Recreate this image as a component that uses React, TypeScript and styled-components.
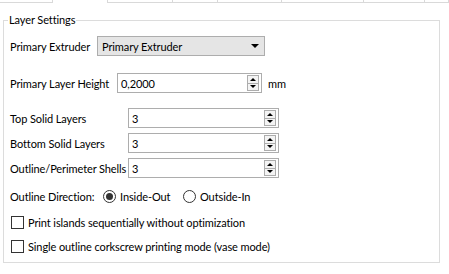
import React from "react";
import styled, { createGlobalStyle } from "styled-components";

const Global = createGlobalStyle`
  html, body { margin: 0; padding: 0; background: #ffffff; }
  body {
    font-family: Lato, "Liberation Sans", sans-serif;
    font-size: 11px;
    letter-spacing: -0.1px;
    color: #000;
  }
`;

const Page = styled.div`
  width: 449px;
  height: 274px;
  background: #fff;
  overflow: hidden;
`;

const TabStrip = styled.div`
  display: flex;
  height: 3px;
`;

const Tab = styled.div<{ $w: number; $sel?: boolean }>`
  box-sizing: border-box;
  width: ${(p) => p.$w}px;
  flex: none;
  height: 3px;
  border-right: 1px solid #d9d9d9;
  border-bottom: ${(p) => (p.$sel ? "none" : "1px solid #d9d9d9")};
`;

const Group = styled.fieldset`
  box-sizing: border-box;
  margin: 10px 0 0 3px;
  width: 437px;
  height: 250px;
  border: 1px solid #dcdcdc;
  padding: 8px 0 0 6px;
`;

const Legend = styled.legend`
  padding: 0 1px;
  margin-left: -2px;
  line-height: 14px;
`;

const Row = styled.div<{ $h: number; $mt?: number }>`
  display: flex;
  align-items: center;
  height: ${(p) => p.$h}px;
  margin-top: ${(p) => p.$mt ?? 0}px;
`;

const Label = styled.span<{ $w?: number; $ml?: number }>`
  white-space: nowrap;
  margin-left: ${(p) => p.$ml ?? 0}px;
  ${(p) => (p.$w ? `width: ${p.$w}px; flex: none;` : "")}
`;

const Combo = styled.div<{ $w: number }>`
  box-sizing: border-box;
  width: ${(p) => p.$w}px;
  height: 20px;
  background: #e5e5e5;
  border: 1px solid #adadad;
  display: flex;
  align-items: center;
  justify-content: space-between;
  padding: 0 5px 0 4px;
`;

const Arrow = styled.span`
  width: 0;
  height: 0;
  border-left: 4px solid transparent;
  border-right: 4px solid transparent;
  border-top: 4px solid #000;
`;

const Spin = styled.div<{ $w: number }>`
  box-sizing: border-box;
  width: ${(p) => p.$w}px;
  height: 20px;
  background: #fff;
  border: 1px solid #adadad;
  display: flex;
  align-items: center;
  justify-content: space-between;
  padding: 0 2px 0 3px;
`;

const SpinButtons = styled.div`
  box-sizing: border-box;
  width: 12px;
  height: 16px;
  border: 1px solid #adadad;
  background: #f4f4f4;
  display: flex;
  flex-direction: column;
`;

const SpinHalf = styled.div<{ $up?: boolean }>`
  flex: 1;
  display: flex;
  align-items: center;
  justify-content: center;
  ${(p) => (p.$up ? "border-bottom: 1px solid #adadad;" : "")}
`;

const Tri = styled.span<{ $up?: boolean }>`
  width: 0;
  height: 0;
  border-left: 3px solid transparent;
  border-right: 3px solid transparent;
  ${(p) => (p.$up ? "border-bottom: 3px solid #000;" : "border-top: 3px solid #000;")}
`;

const Radio = styled.span<{ $on?: boolean }>`
  box-sizing: border-box;
  width: 13px;
  height: 13px;
  border-radius: 50%;
  border: 1px solid #333;
  display: inline-flex;
  align-items: center;
  justify-content: center;
  flex: none;
  &::after {
    content: "";
    width: 7px;
    height: 7px;
    border-radius: 50%;
    background: ${(p) => (p.$on ? "#333" : "transparent")};
  }
`;

const Check = styled.span`
  box-sizing: border-box;
  width: 13px;
  height: 13px;
  border: 1px solid #333;
  background: #fff;
  flex: none;
`;

const Option = styled.span<{ $ml?: number; $w?: number }>`
  display: inline-flex;
  align-items: center;
  gap: 4px;
  margin-left: ${(p) => p.$ml ?? 0}px;
  ${(p) => (p.$w ? `width: ${p.$w}px; flex: none;` : "")}
`;

const SpinBox = ({ w, value }: { w: number; value: string }) => (
  <Spin $w={w}>
    <span>{value}</span>
    <SpinButtons>
      <SpinHalf $up>
        <Tri $up />
      </SpinHalf>
      <SpinHalf>
        <Tri />
      </SpinHalf>
    </SpinButtons>
  </Spin>
);

export default function App() {
  const tabs = [53, 55, 65, 45, 64, 82, 61, 24];
  return (
    <Page>
      <Global />
      <TabStrip>
        {tabs.map((w, i) => (
          <Tab key={i} $w={w} $sel={i === 1} />
        ))}
      </TabStrip>
      <Group>
        <Legend>Layer Settings</Legend>
        <Row $h={20} $mt={1}>
          <Label $w={87}>Primary Extruder</Label>
          <Combo $w={168}>
            <span>Primary Extruder</span>
            <Arrow />
          </Combo>
        </Row>
        <Row $h={20} $mt={17}>
          <Label $w={107}>Primary Layer Height</Label>
          <SpinBox w={145} value="0,2000" />
          <Label $ml={6}>mm</Label>
        </Row>
        <Row $h={20} $mt={15}>
          <Label $w={118}>Top Solid Layers</Label>
          <SpinBox w={151} value="3" />
        </Row>
        <Row $h={20} $mt={5}>
          <Label $w={118}>Bottom Solid Layers</Label>
          <SpinBox w={151} value="3" />
        </Row>
        <Row $h={20} $mt={5}>
          <Label $w={118}>Outline/Perimeter Shells</Label>
          <SpinBox w={151} value="3" />
        </Row>
        <Row $h={20} $mt={8}>
          <Label $w={93}>Outline Direction:</Label>
          <Option $w={80}>
            <Radio $on />
            Inside-Out
          </Option>
          <Option>
            <Radio />
            Outside-In
          </Option>
        </Row>
        <Row $h={20} $mt={6}>
          <Option $ml={1}>
            <Check />
            Print islands sequentially without optimization
          </Option>
        </Row>
        <Row $h={20} $mt={4}>
          <Option $ml={1}>
            <Check />
            Single outline corkscrew printing mode (vase mode)
          </Option>
        </Row>
      </Group>
    </Page>
  );
}
